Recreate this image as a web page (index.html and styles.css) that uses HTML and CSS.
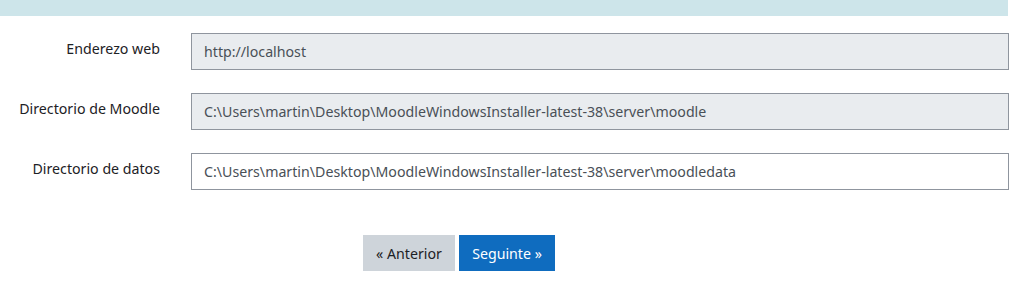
FILE: index.html
```html
<!DOCTYPE html>
<html lang="gl">
  <head>
    <meta charset="UTF-8" />
    <title>Instalación</title>
    <link rel="stylesheet" href="styles.css">
  </head>
  <body>
    <div class="page">
      <div class="topbar"></div>

      <form class="settings">
        <div class="row">
          <label class="label">Enderezo web</label>
          <input class="field" type="text" value="http://localhost" disabled />
        </div>
        <div class="row">
          <label class="label">Directorio de Moodle</label>
          <input class="field" type="text" value="C:\Users\martin\Desktop\MoodleWindowsInstaller-latest-38\server\moodle" disabled />
        </div>
        <div class="row">
          <label class="label">Directorio de datos</label>
          <input class="field" type="text" value="C:\Users\martin\Desktop\MoodleWindowsInstaller-latest-38\server\moodledata" />
        </div>

        <div class="buttons">
          <button class="btn btn-secondary" type="button">« Anterior</button>
          <button class="btn btn-primary" type="button">Seguinte »</button>
        </div>
      </form>
    </div>
  </body>
</html>
```

FILE: styles.css
```css
* {
  margin: 0;
  padding: 0;
  box-sizing: border-box;
}

body {
  background-color: #fff;
  font-family: "Noto Sans", "Open Sans", sans-serif;
  font-size: 14.2px;
  color: #1d2125;
}

.page {
  width: 1009px;
}

.topbar {
  height: 16px;
  width: 1008px;
  background-color: #cde5ea;
}

.settings {
  padding-top: 17px;
}

.row {
  display: flex;
  align-items: flex-start;
  height: 37px;
  margin-bottom: 23px;
}

.label {
  width: 160px;
  text-align: right;
  padding-top: 6px;
  margin-right: 31px;
  line-height: 20px;
}

.field {
  flex: 1;
  height: 37px;
  border: 1px solid #8f959e;
  background-color: #fff;
  color: #495057;
  font-family: inherit;
  font-size: 14.2px;
  padding: 0 12px;
}

.field:disabled {
  background-color: #e9ecef;
}

.buttons {
  display: flex;
  gap: 4px;
  padding-left: 363px;
  padding-top: 22px;
}

.btn {
  height: 36px;
  border: none;
  font-family: inherit;
  font-size: 14.2px;
  padding: 0 12px;
}

.btn-secondary {
  background-color: #ced4da;
  color: #1d2125;
  width: 92px;
}

.btn-primary {
  background-color: #0f6cbf;
  color: #fff;
  width: 96px;
}
```
